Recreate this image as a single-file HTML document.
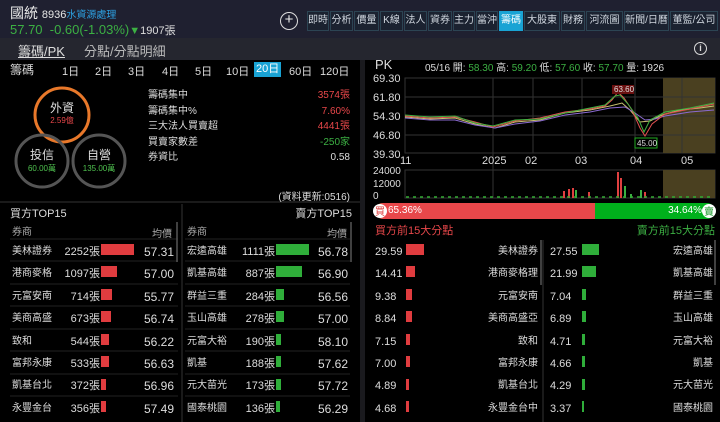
<!DOCTYPE html>
<html><head><meta charset="utf-8"><style>
*{margin:0;padding:0;box-sizing:border-box}
body{width:720px;height:422px;overflow:hidden;background:#000;font-family:"Liberation Sans","Noto Sans CJK TC",sans-serif;color:#ddd;position:relative;font-size:11px}
.a{position:absolute;white-space:nowrap}
.r{text-align:right}
.red{color:#e8474a}.grn{color:#3cb043}.gl{color:#4fc24f}
.tab{position:absolute;top:11px;height:20px;border:1px solid #2c4453;background:#1b2230;color:#cfd6de;font-size:10px;line-height:18px;text-align:center}
.act{background:#19a3d4;color:#fff;border-color:#19a3d4}
</style></head><body>
<div class="a" style="left:0;top:0;width:720px;height:38px;background:#1f2030"></div>
<div class="a" style="left:0;top:38px;width:720px;height:22px;background:#25262f"></div>
<div class="a" style="left:360px;top:60px;width:5px;height:362px;background:#1a1a1e"></div>

<div class="a" style="left:10px;top:3px;font-size:14px;color:#e6e6e6">國統 <span style="font-size:11px">8936</span><span style="font-size:10px;color:#2c9fe0">水資源處理</span></div>
<div class="a" style="left:10px;top:22px;font-size:13px;color:#3cb043">57.70 &nbsp;-0.60(-1.03%)<span style="font-size:11px">▼</span><span style="font-size:11px;color:#ddd">1907張</span></div>
<div class="a" style="left:280px;top:12px;width:18px;height:18px;border:1.5px solid #ddd;border-radius:50%;text-align:center;line-height:14px;font-size:15px;color:#eee">+</div>

<div class="tab" style="left:307px;width:22px">即時</div>
<div class="tab" style="left:330px;width:23px">分析</div>
<div class="tab" style="left:354px;width:25px">價量</div>
<div class="tab" style="left:380px;width:23px">K線</div>
<div class="tab" style="left:404px;width:23px">法人</div>
<div class="tab" style="left:428px;width:24px">資券</div>
<div class="tab" style="left:453px;width:22px">主力</div>
<div class="tab" style="left:476px;width:22px">當沖</div>
<div class="tab act" style="left:499px;width:24px">籌碼</div>
<div class="tab" style="left:524px;width:36px">大股東</div>
<div class="tab" style="left:561px;width:24px">財務</div>
<div class="tab" style="left:586px;width:37px">河流圖</div>
<div class="tab" style="left:624px;width:45px">新聞/日曆</div>
<div class="tab" style="left:670px;width:48px">董監/公司</div>

<div class="a" style="left:18px;top:41px;font-size:13px;color:#ddd;text-decoration:underline">籌碼/PK</div>
<div class="a" style="left:84px;top:41px;font-size:13px;color:#bbb">分點/分點明細</div>
<div class="a" style="left:694px;top:42px;width:13px;height:13px;border:1.5px solid #ddd;border-radius:50%;font-size:9px;line-height:10px;text-align:center;color:#ddd;font-weight:bold">i</div>

<div class="a" style="left:10px;top:61px;font-size:12px;color:#ddd">籌碼</div>
<div class="a" style="left:62px;top:63px;font-size:11px;word-spacing:0">1日</div>
<div class="a" style="left:95px;top:63px">2日</div>
<div class="a" style="left:128px;top:63px">3日</div>
<div class="a" style="left:162px;top:63px">4日</div>
<div class="a" style="left:195px;top:63px">5日</div>
<div class="a" style="left:226px;top:63px">10日</div>
<div class="a" style="left:254px;top:62px;background:#19a3d4;color:#fff;padding:0 2px;height:15px;line-height:15px">20日</div>
<div class="a" style="left:289px;top:63px">60日</div>
<div class="a" style="left:320px;top:63px">120日</div>

<svg class="a" style="left:0;top:0" width="720" height="422">
<circle cx="62" cy="115" r="27" fill="none" stroke="#e8782a" stroke-width="3"/>
<circle cx="42" cy="161" r="26" fill="none" stroke="#555" stroke-width="3"/>
<circle cx="99" cy="161" r="26" fill="none" stroke="#555" stroke-width="3"/>
<line x1="0" y1="202" x2="360" y2="202" stroke="#333"/>
<line x1="182" y1="204" x2="182" y2="422" stroke="#333"/>
<g stroke="#222"><line x1="10" y1="239" x2="178" y2="239"/><line x1="10" y1="261" x2="178" y2="261"/><line x1="10" y1="284" x2="178" y2="284"/><line x1="10" y1="306" x2="178" y2="306"/><line x1="10" y1="329" x2="178" y2="329"/><line x1="10" y1="351" x2="178" y2="351"/><line x1="10" y1="374" x2="178" y2="374"/><line x1="10" y1="396" x2="178" y2="396"/>
<line x1="185" y1="239" x2="350" y2="239"/><line x1="185" y1="261" x2="350" y2="261"/><line x1="185" y1="284" x2="350" y2="284"/><line x1="185" y1="306" x2="350" y2="306"/><line x1="185" y1="329" x2="350" y2="329"/><line x1="185" y1="351" x2="350" y2="351"/><line x1="185" y1="374" x2="350" y2="374"/><line x1="185" y1="396" x2="350" y2="396"/></g>
<g fill="#e03c3f"><rect x="101" y="244" width="33" height="11"/><rect x="101" y="266" width="16" height="11"/><rect x="101" y="289" width="11" height="11"/><rect x="101" y="311" width="10" height="11"/><rect x="101" y="334" width="8" height="11"/><rect x="101" y="356" width="8" height="11"/><rect x="101" y="379" width="5" height="11"/><rect x="101" y="401" width="5" height="11"/></g>
<g fill="#2fae3a"><rect x="276" y="244" width="33" height="11"/><rect x="276" y="266" width="26" height="11"/><rect x="276" y="289" width="8" height="11"/><rect x="276" y="311" width="8" height="11"/><rect x="276" y="334" width="5" height="11"/><rect x="276" y="356" width="5" height="11"/><rect x="276" y="379" width="5" height="11"/><rect x="276" y="401" width="4" height="11"/></g>
<line x1="177" y1="222" x2="177" y2="262" stroke="#555" stroke-width="1.5"/>
<line x1="351" y1="222" x2="351" y2="262" stroke="#555" stroke-width="1.5"/>
<!-- chart -->
<rect x="405" y="78" width="310" height="75" fill="#000" stroke="#333"/>
<rect x="663" y="78" width="52" height="75" fill="#4a4020"/>
<g stroke="#333"><line x1="405" y1="97" x2="715" y2="97"/><line x1="405" y1="116" x2="715" y2="116"/><line x1="405" y1="135" x2="715" y2="135"/><line x1="493" y1="78" x2="493" y2="198"/><line x1="533" y1="78" x2="533" y2="153"/><line x1="582" y1="78" x2="582" y2="153"/><line x1="635" y1="78" x2="635" y2="153"/><line x1="682" y1="78" x2="682" y2="153"/></g>
<rect x="405" y="170" width="310" height="28" fill="none" stroke="#333"/>
<rect x="663" y="170" width="52" height="28" fill="#4a4020"/>
<polyline fill="none" stroke="#c8c070" stroke-width="1" points="405,117 430,119 455,118 475,124 495,128 515,122 540,120 565,113 590,110 610,106 622,103 630,110 640,122 650,121 662,115 680,110 700,108 714,106"/>
<polyline fill="none" stroke="#8a6ad0" stroke-width="1" points="405,118 430,120 455,120 475,125 495,128 515,124 540,121 565,115 590,112 610,108 625,107 635,113 645,120 655,119 665,116 690,112 714,110"/>
<polyline fill="none" stroke="#e05050" stroke-width="1" points="405,116 430,118 455,117 475,122 493,127 515,121 540,118 565,112 590,109 605,106 612,100 618,92 624,98 632,110 640,128 645,136 652,124 665,114 690,109 714,104"/>
<polyline fill="none" stroke="#40b040" stroke-width="1" points="405,115 430,117 455,116 475,123 493,126 515,120 540,119 565,113 590,108 605,105 615,96 620,95 628,104 638,118 644,132 650,120 665,112 690,108 714,103"/>
<rect x="612" y="85" width="22" height="9" fill="#6a1010"/><text x="614" y="92" font-size="8" fill="#ddd" font-family="Liberation Sans">63.60</text>
<rect x="635" y="138" width="22" height="10" fill="#000" stroke="#2a2"/><text x="637" y="146" font-size="8" fill="#ddd" font-family="Liberation Sans">45.00</text>
<g fill="#e04040"><rect x="617" y="172" width="2" height="26"/><rect x="620" y="178" width="2" height="20"/><rect x="563" y="191" width="2" height="7"/><rect x="568" y="189" width="2" height="9"/><rect x="572" y="188" width="2" height="10"/><rect x="644" y="192" width="2" height="6"/><rect x="588" y="192" width="2" height="6"/></g>
<g fill="#3cb043"><rect x="575" y="190" width="2" height="8"/><rect x="624" y="186" width="2" height="12"/><rect x="640" y="190" width="2" height="8"/><rect x="630" y="194" width="2" height="4"/></g>
<line x1="406" y1="197" x2="714" y2="197" stroke="#3a3" stroke-width="1.5" stroke-dasharray="3,4"/>
<!-- ratio bar -->
<rect x="375" y="203" width="340" height="16" rx="8" fill="#00b01c"/>
<path d="M383 203 H595 V219 H383 A8 8 0 0 1 383 203Z" fill="#e8474a"/>
<circle cx="380" cy="211" r="7" fill="#fff"/><circle cx="709" cy="211" r="7" fill="#fff"/>
<text x="375" y="215" font-size="10" fill="#e04040" font-family="Noto Sans CJK TC">買</text>
<text x="704" y="215" font-size="10" fill="#1a9a2a" font-family="Noto Sans CJK TC">賣</text>
<line x1="543" y1="240" x2="543" y2="422" stroke="#333"/>
<line x1="541" y1="240" x2="541" y2="285" stroke="#555" stroke-width="1.5"/>
<line x1="715" y1="240" x2="715" y2="285" stroke="#555" stroke-width="1.5"/>
<g fill="#e03c3f"><rect x="406" y="244" width="18" height="11"/><rect x="406" y="266" width="9" height="11"/><rect x="406" y="289" width="6" height="11"/><rect x="406" y="311" width="6" height="11"/><rect x="406" y="334" width="4" height="11"/><rect x="406" y="356" width="4" height="11"/><rect x="406" y="379" width="3" height="11"/><rect x="406" y="401" width="3" height="11"/></g>
<g fill="#2fae3a"><rect x="582" y="244" width="17" height="11"/><rect x="582" y="266" width="14" height="11"/><rect x="582" y="289" width="4" height="11"/><rect x="582" y="311" width="4" height="11"/><rect x="582" y="334" width="3" height="11"/><rect x="582" y="356" width="3" height="11"/><rect x="582" y="379" width="3" height="11"/><rect x="582" y="401" width="2" height="11"/></g>
</svg>

<div class="a" style="left:42px;top:99px;width:40px;text-align:center;font-size:12px">外資</div>
<div class="a red" style="left:42px;top:115px;width:40px;text-align:center;font-size:8px">2.59億</div>
<div class="a" style="left:22px;top:146px;width:40px;text-align:center;font-size:12px">投信</div>
<div class="a gl" style="left:17px;top:163px;width:50px;text-align:center;font-size:8px">60.00萬</div>
<div class="a" style="left:79px;top:146px;width:40px;text-align:center;font-size:12px">自營</div>
<div class="a gl" style="left:74px;top:163px;width:50px;text-align:center;font-size:8px">135.00萬</div>

<div class="a" style="left:148px;top:88px;line-height:15.5px;font-size:10px">籌碼集中<br>籌碼集中%<br>三大法人買賣超<br>買賣家數差<br>券資比</div>
<div class="a r" style="left:280px;top:88px;width:70px;line-height:15.5px;font-size:10px"><span class="red">3574張</span><br><span class="red">7.60%</span><br><span class="red">4441張</span><br><span class="grn">-250家</span><br>0.58</div>
<div class="a r" style="left:250px;top:188px;width:100px;font-size:10px">(資料更新:0516)</div>

<div class="a" style="left:10px;top:205px;font-size:11px">買方TOP15</div>
<div class="a r" style="left:250px;top:205px;width:102px;font-size:11px">賣方TOP15</div>
<div class="a" style="left:12px;top:223px;font-size:10px;color:#aaa">券商</div>
<div class="a" style="left:152px;top:225px;font-size:10px;color:#aaa">均價</div>
<div class="a" style="left:187px;top:223px;font-size:10px;color:#aaa">券商</div>
<div class="a" style="left:327px;top:225px;font-size:10px;color:#aaa">均價</div>

<div class="a" style="left:12px;top:241px;line-height:22.4px;font-size:10px">美林證券<br>港商麥格<br>元富安南<br>美商高盛<br>致和<br>富邦永康<br>凱基台北<br>永豐金台</div>
<div class="a r" style="left:50px;top:241px;width:50px;line-height:22.4px;font-size:11px">2252張<br>1097張<br>714張<br>673張<br>544張<br>533張<br>372張<br>356張</div>
<div class="a r" style="left:130px;top:241px;width:44px;line-height:22.4px;font-size:12px">57.31<br>57.00<br>55.77<br>56.74<br>56.22<br>56.63<br>56.96<br>57.49</div>
<div class="a" style="left:187px;top:241px;line-height:22.4px;font-size:10px">宏遠高雄<br>凱基高雄<br>群益三重<br>玉山高雄<br>元富大裕<br>凱基<br>元大苗光<br>國泰桃園</div>
<div class="a r" style="left:225px;top:241px;width:50px;line-height:22.4px;font-size:11px">1111張<br>887張<br>284張<br>278張<br>190張<br>188張<br>173張<br>136張</div>
<div class="a r" style="left:304px;top:241px;width:44px;line-height:22.4px;font-size:12px">56.78<br>56.90<br>56.56<br>57.00<br>58.10<br>57.62<br>57.72<br>56.29</div>

<div class="a" style="left:375px;top:57px;font-size:13px">PK</div>
<div class="a" style="left:425px;top:59px;font-size:10px">05/16 開: <span class="grn">58.30</span> 高: <span class="grn">59.20</span> 低: <span class="grn">57.60</span> 收: <span class="grn">57.70</span> 量: 1926</div>
<div class="a" style="left:373px;top:70px;line-height:19px;font-size:11px">69.30<br>61.80<br>54.30<br>46.80<br>39.30</div>
<div class="a" style="left:400px;top:155px;font-size:11px">11</div>
<div class="a" style="left:482px;top:155px;font-size:11px">2025</div>
<div class="a" style="left:525px;top:155px;font-size:11px">02</div>
<div class="a" style="left:575px;top:155px;font-size:11px">03</div>
<div class="a" style="left:630px;top:155px;font-size:11px">04</div>
<div class="a" style="left:681px;top:155px;font-size:11px">05</div>
<div class="a" style="left:373px;top:166px;line-height:12.5px;font-size:10px">24000<br>12000<br>0</div>
<div class="a" style="left:388px;top:205px;font-size:10px;color:#fff">65.36%</div>
<div class="a r" style="left:640px;top:205px;width:62px;font-size:10px;color:#fff">34.64%</div>
<div class="a red" style="left:375px;top:222px;font-size:11px">買方前15大分點</div>
<div class="a grn r" style="left:600px;top:222px;width:115px;font-size:11px">賣方前15大分點</div>

<div class="a" style="left:375px;top:241px;line-height:22.4px;font-size:11px">29.59<br>14.41<br>9.38<br>8.84<br>7.15<br>7.00<br>4.89<br>4.68</div>
<div class="a r" style="left:440px;top:241px;width:98px;line-height:22.4px;font-size:10px">美林證券<br>港商麥格理<br>元富安南<br>美商高盛亞<br>致和<br>富邦永康<br>凱基台北<br>永豐金台中</div>
<div class="a" style="left:550px;top:241px;line-height:22.4px;font-size:11px">27.55<br>21.99<br>7.04<br>6.89<br>4.71<br>4.66<br>4.29<br>3.37</div>
<div class="a r" style="left:620px;top:241px;width:93px;line-height:22.4px;font-size:10px">宏遠高雄<br>凱基高雄<br>群益三重<br>玉山高雄<br>元富大裕<br>凱基<br>元大苗光<br>國泰桃園</div>
</body></html>
